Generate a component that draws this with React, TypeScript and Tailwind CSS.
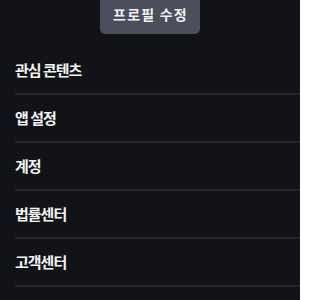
const items = ["관심 콘텐츠", "앱 설정", "계정", "법률센터", "고객센터"];

export default function App() {
  return (
    <div
      className="w-[300px] h-[300px] overflow-hidden bg-[#111318] text-white"
      style={{ fontFamily: '"Noto Sans CJK KR", "Noto Sans", sans-serif' }}
    >
      <div className="flex justify-center">
        <button className="w-[100px] h-[34px] pb-[5px] rounded-b-[5px] bg-[#4b4e5b] text-[14px] font-bold tracking-[1.2px] pl-[1px] text-[#f1f1f3]">
          프로필 수정
        </button>
      </div>
      <ul className="mt-[13px] pl-[15px]">
        {items.map((label) => (
          <li
            key={label}
            className="h-[48px] flex items-center border-b-2 border-[#25272c] text-[15px] font-bold tracking-[-1px] text-[#f4f4f6]"
          >
            {label}
          </li>
        ))}
      </ul>
    </div>
  );
}
